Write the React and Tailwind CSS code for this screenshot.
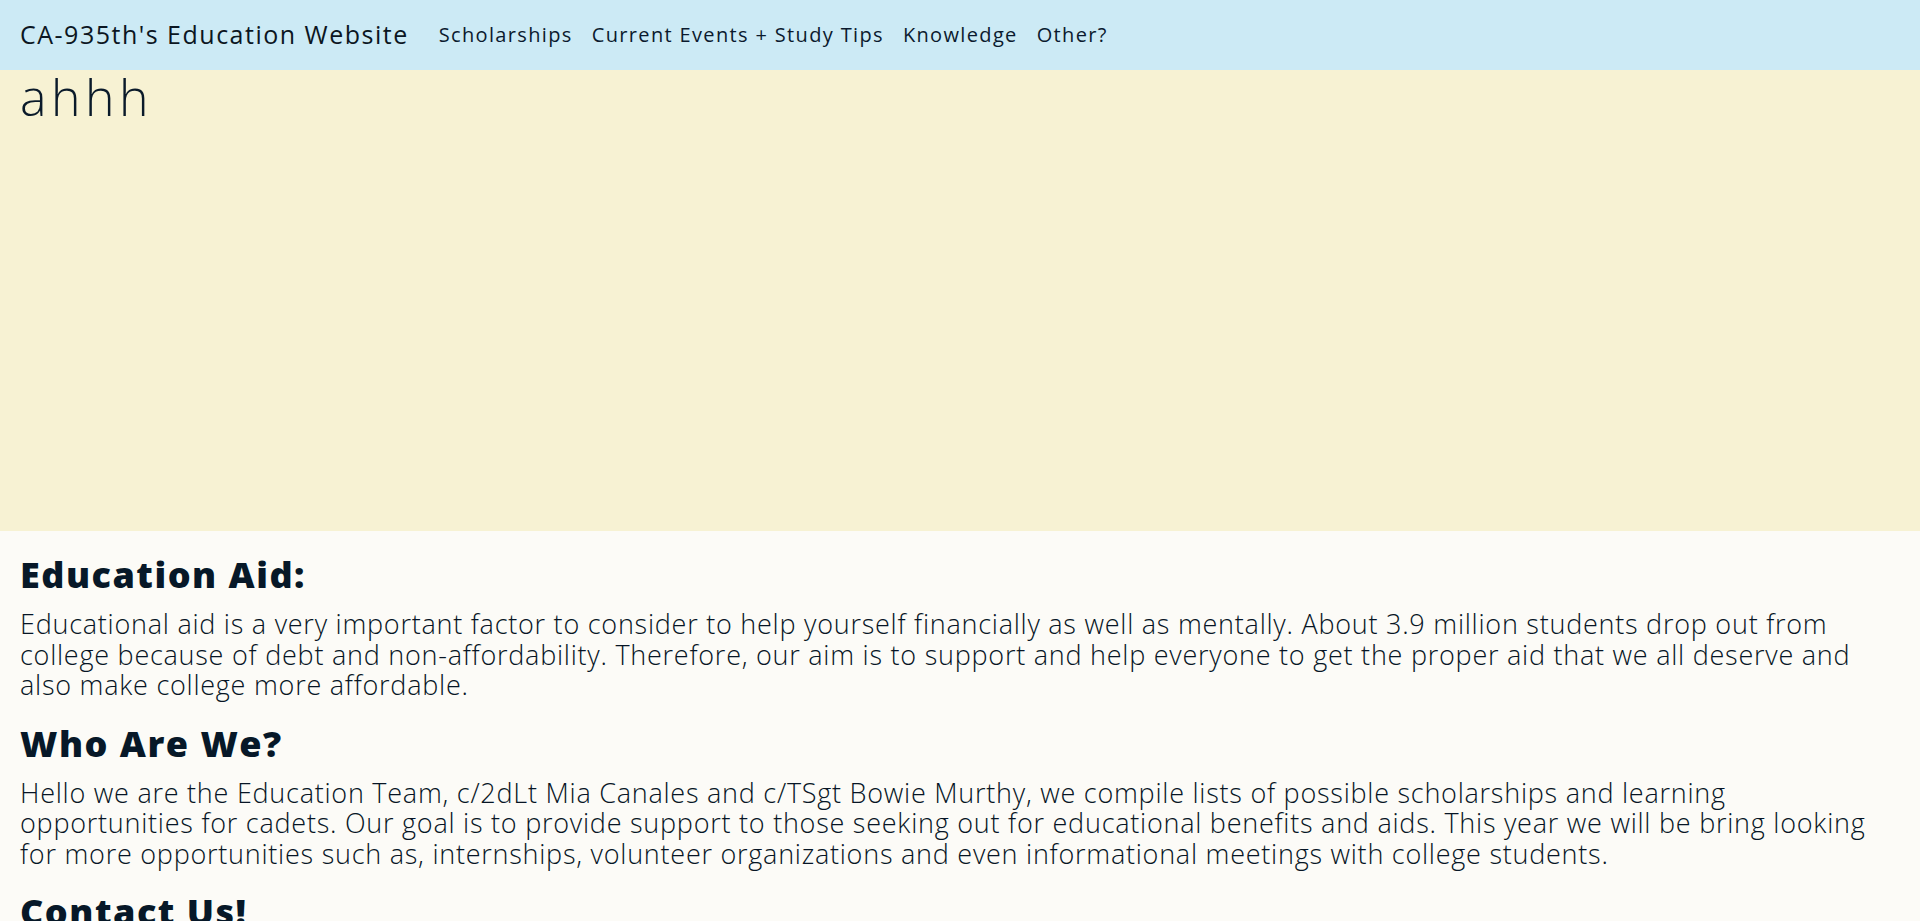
import React from 'react';

const links = ['Scholarships', 'Current Events + Study Tips', 'Knowledge', 'Other?'];

function Section({ title, children }) {
  return (
    <section className="mb-[21px]">
      <h2 className="text-[36px] leading-[44px] font-extrabold tracking-[1.5px] text-[#071828] mb-[12px]">
        {title}
      </h2>
      <p className="text-[27px] leading-[30.5px] font-light tracking-[0.75px] text-[#071525]">{children}</p>
    </section>
  );
}

export default function App() {
  return (
    <div className="min-h-screen bg-[#fcfbf7] text-[#0a1a2a]" style={{ fontFamily: '"Open Sans", "Noto Sans", sans-serif' }}>
      {/* top bar */}
      <nav className="h-[70px] bg-[#cceaf5] flex items-center px-5">
        <div className="text-[25px] tracking-[1.5px] text-[#0b1622]">CA-935th's Education Website</div>
        <ul className="flex items-center gap-[19px] ml-[30px]">
          {links.map((l) => (
            <li key={l} className="text-[20px] tracking-[1.35px] text-[#0b1a2e]">
              {l}
            </li>
          ))}
        </ul>
      </nav>

      {/* hero */}
      <header className="h-[461px] bg-[#f7f2d3] px-5">
        <h1 className="text-[50px] leading-[54px] font-light tracking-[4.5px] text-[#0a1a2a]">ahhh</h1>
      </header>

      <main className="px-5 pt-[22px] pb-[900px]">
        <Section title="Education Aid:">
          Educational aid is a very important factor to consider to help yourself financially as well as mentally.
          About 3.9 million students drop out from college because of debt and non-affordability. Therefore, our aim
          is to support and help everyone to get the proper aid that we all deserve and also make college more
          affordable.
        </Section>
        <Section title="Who Are We?">
          Hello we are the Education Team, c/2dLt Mia Canales and c/TSgt Bowie Murthy, we compile lists of possible
          scholarships and learning opportunities for cadets. Our goal is to provide support to those seeking out for
          educational benefits and aids. This year we will be bring looking for more opportunities such as,
          internships, volunteer organizations and even informational meetings with college students.
        </Section>
        <Section title="Contact Us!">
          Have questions about scholarships or study resources? Reach out to the Education Team at your next squadron
          meeting.
        </Section>
      </main>
    </div>
  );
}
